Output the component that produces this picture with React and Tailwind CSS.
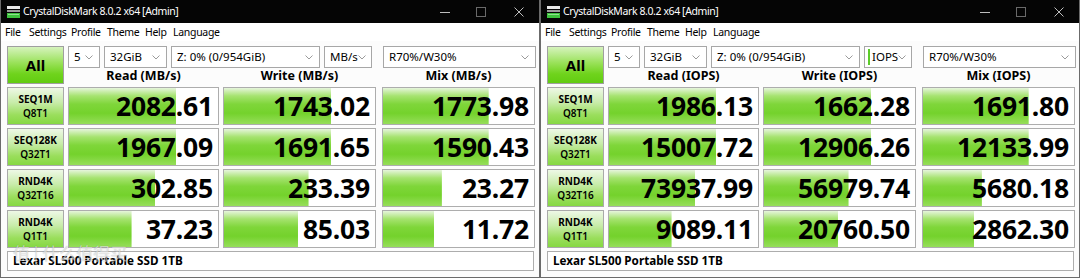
import React from "react";

const ROWS = [
  ["SEQ1M", "Q8T1"],
  ["SEQ128K", "Q32T1"],
  ["RND4K", "Q32T16"],
  ["RND4K", "Q1T1"],
];

const BARS = [
  [72, 71, 70],
  [72, 71, 70],
  [58, 56, 39],
  [42, 49, 34],
];

const LEFT = [
  ["2082.61", "1743.02", "1773.98"],
  ["1967.09", "1691.65", "1590.43"],
  ["302.85", "233.39", "23.27"],
  ["37.23", "85.03", "11.72"],
];

const RIGHT = [
  ["1986.13", "1662.28", "1691.80"],
  ["15007.72", "12906.26", "12133.99"],
  ["73937.99", "56979.74", "5680.18"],
  ["9089.11", "20760.50", "2862.30"],
];

function AppIcon() {
  return (
    <svg width="15" height="14" viewBox="0 0 15 14">
      <rect x="1" y="1" width="13" height="3" fill="#e8e8e8" />
      <rect x="1" y="5" width="13" height="2" fill="#9a9a9a" />
      <rect x="1" y="8" width="13" height="5" fill="#3cc23c" />
      <rect x="2" y="9" width="11" height="1" fill="#8fe08f" />
    </svg>
  );
}

function Chevron() {
  return (
    <svg width="8" height="5" viewBox="0 0 8 5" className="shrink-0">
      <path d="M0.5 0.5 L4 4 L7.5 0.5" fill="none" stroke="#9a9a9a" strokeWidth="1" />
    </svg>
  );
}

function Select({ w, children, cursor }) {
  return (
    <div
      className="h-[22px] border border-[#a7a7a7] bg-white flex items-center justify-between pl-[5px] pr-[6px] text-[11.5px] text-black leading-none"
      style={{ width: w }}
    >
      <span className="flex items-center whitespace-nowrap">
        {cursor && <span className="w-[2px] h-[16px] bg-[#5ccc2a] mr-[2px] -ml-[2px]" />}
        {children}
      </span>
      <Chevron />
    </div>
  );
}

function Window({ unit, values, modeLabel, watermark }) {
  const colW = ["w-[151px]", "w-[153px]", "w-[153px]"];
  return (
    <div className="w-[540px] h-[278px] flex flex-col border-l border-r border-b border-[#6b6b6b] bg-white">
      {/* title bar */}
      <div className="h-[23px] bg-[#050505] flex items-center pl-[5px] shrink-0">
        <AppIcon />
        <span className="ml-[2px] text-[10.5px] tracking-[-0.4px] text-white leading-none whitespace-nowrap">CrystalDiskMark 8.0.2 x64 [Admin]</span>
        <div className="ml-auto flex items-center h-full">
          <div className="w-[36px] flex justify-center">
            <svg width="10" height="10" viewBox="0 0 10 10"><path d="M0 5.5 H10" stroke="#bdbdbd" strokeWidth="1" /></svg>
          </div>
          <div className="w-[36px] flex justify-center">
            <svg width="10" height="10" viewBox="0 0 10 10"><rect x="0.5" y="0.5" width="9" height="9" fill="none" stroke="#6a6a6a" strokeWidth="1" /></svg>
          </div>
          <div className="w-[40px] flex justify-center">
            <svg width="10" height="10" viewBox="0 0 10 10"><path d="M0.5 0.5 L9.5 9.5 M9.5 0.5 L0.5 9.5" stroke="#bdbdbd" strokeWidth="1" /></svg>
          </div>
        </div>
      </div>
      {/* menu bar */}
      <div className="h-[18px] flex items-center pl-[4px] text-[10.5px] tracking-[-0.3px] text-black leading-none shrink-0 whitespace-nowrap">
        <span className="w-[24px] shrink-0">File</span>
        <span className="w-[42px] shrink-0">Settings</span>
        <span className="w-[36px] shrink-0">Profile</span>
        <span className="w-[38px] shrink-0">Theme</span>
        <span className="w-[28px] shrink-0">Help</span>
        <span className="shrink-0">Language</span>
      </div>
      {/* content */}
      <div className="flex flex-col pl-[6px] pt-[5px] bg-[#fcfcfc] flex-1 relative">
        <div className="flex">
          <div className="w-[57px] h-[38px] border border-[#9f9f9f] bg-[linear-gradient(to_bottom,#d6f3bd,#98e157_45%,#6fd31c_75%,#62cc12)] flex items-center justify-center text-[15px] font-bold text-black">
            All
          </div>
          <div className="flex flex-col ml-[4px]">
            <div className="flex">
              <Select w="32px">5</Select>
              <div className="w-[4px]" />
              <Select w="63px">32GiB</Select>
              <div className="w-[4px]" />
              <Select w="149px">Z: 0% (0/954GiB)</Select>
              <div className="w-[4px]" />
              <Select w="48px" cursor={modeLabel === "IOPS"}>{modeLabel}</Select>
              <div className="w-[11px]" />
              <Select w="153px">R70%/W30%</Select>
            </div>
            <div className="flex h-[16px] items-center text-[12.5px] font-bold text-black leading-none">
              <div className="w-[151px] text-center">Read ({unit})</div>
              <div className="w-[4px]" />
              <div className="w-[153px] text-center">Write ({unit})</div>
              <div className="w-[6px]" />
              <div className="w-[153px] text-center">Mix ({unit})</div>
            </div>
          </div>
        </div>
        <div className="flex flex-col gap-[3px] mt-[3px]">
          {ROWS.map((r, i) => (
            <div key={i} className="flex h-[38px]">
              <div className="w-[57px] border border-[#a9a9a9] bg-[linear-gradient(to_bottom,#eef8e6,#c8ecaa_40%,#9ade5c_75%,#86d843)] flex flex-col items-center justify-center text-[10px] font-bold text-black leading-[14px]">
                <span>{r[0]}</span>
                <span className="font-semibold">{r[1]}</span>
              </div>
              {values[i].map((v, j) => (
                <div
                  key={j}
                  className={`${colW[j]} ${j === 0 ? "ml-[4px]" : j === 1 ? "ml-[4px]" : "ml-[6px]"} border border-[#adadad] bg-white bg-no-repeat bg-[linear-gradient(to_bottom,#e6f5dc,#a6e370_22%,#7fd63a_45%,#74d22c_70%,#96de5a)] flex items-center justify-end pr-[5px] text-[26.5px] font-bold text-black leading-none tracking-[-0.2px]`}
                  style={{ backgroundSize: `${BARS[i][j]}% 100%` }}
                >
                  {v}
                </div>
              ))}
            </div>
          ))}
        </div>
        <div className="mt-[3px] w-[527px] h-[20px] border border-[#adadad] bg-white flex items-center pl-[5px] text-[11.7px] font-bold text-black leading-none">
          Lexar SL500 Portable SSD 1TB
        </div>
        {watermark && (
          <div
            className="absolute left-[12px] top-[203px] text-[17px] leading-none text-white/60 whitespace-nowrap pointer-events-none [text-shadow:0_0_1px_rgba(0,0,0,0.3)]"
            style={{ fontFamily: '"Noto Sans CJK SC", sans-serif' }}
          >
            值 | 什么值得买
          </div>
        )}
      </div>
    </div>
  );
}

export default function App() {
  return (
    <div
      className="w-[1080px] h-[278px] flex overflow-hidden bg-[#2a2a2a]"
      style={{ fontFamily: '"Noto Sans", "Open Sans", sans-serif' }}
    >
      <Window unit="MB/s" modeLabel="MB/s" values={LEFT} watermark />
      <Window unit="IOPS" modeLabel="IOPS" values={RIGHT} />
    </div>
  );
}
